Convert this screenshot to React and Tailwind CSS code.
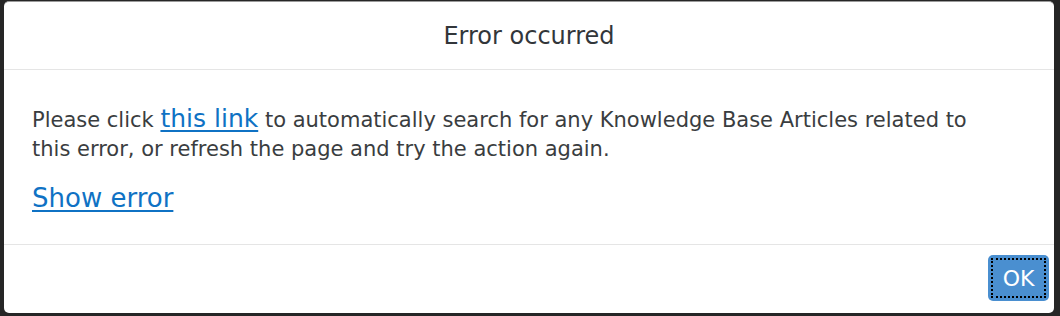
export default function App() {
  return (
    <div className="w-[1060px] h-[316px] bg-[#262626] pt-px pl-1 overflow-hidden" style={{ fontFamily: '"DejaVu Sans", "Noto Sans", sans-serif' }}>
      <div className="w-[1050px] h-[312px] bg-white rounded-[5px] border-t border-t-[#9a9a9a] flex flex-col">
        <div className="h-[68px] border-b border-[#e5e5e5] flex items-center justify-center">
          <span className="text-[24px] text-[#32363a]">Error occurred</span>
        </div>
        <div className="flex-1 pl-[28px] pr-[60px] pt-[34px]">
          <p className="text-[21px] leading-[29px] text-[#3a3d40]">
            Please click{' '}
            <a href="#" className="text-[25px] text-[#0f72c4] underline underline-offset-[3px]">this link</a>{' '}
            to automatically search for any Knowledge Base Articles related to this error, or refresh the page and try the action again.
          </p>
          <a href="#" className="block mt-[18px] text-[26px] text-[#0f72c4] underline underline-offset-[3px] leading-[32px] w-fit">Show error</a>
        </div>
        <div className="h-[69px] border-t border-[#e5e5e5] flex items-start justify-end pt-[10px] pr-[5px]">
          <button className="w-[61px] h-[46px] rounded-[5px] bg-[#4a8fd0] p-[3px]">
            <span className="flex items-center justify-center w-full h-full border-[2px] border-dotted border-black text-white text-[22px]">OK</span>
          </button>
        </div>
      </div>
    </div>
  );
}
